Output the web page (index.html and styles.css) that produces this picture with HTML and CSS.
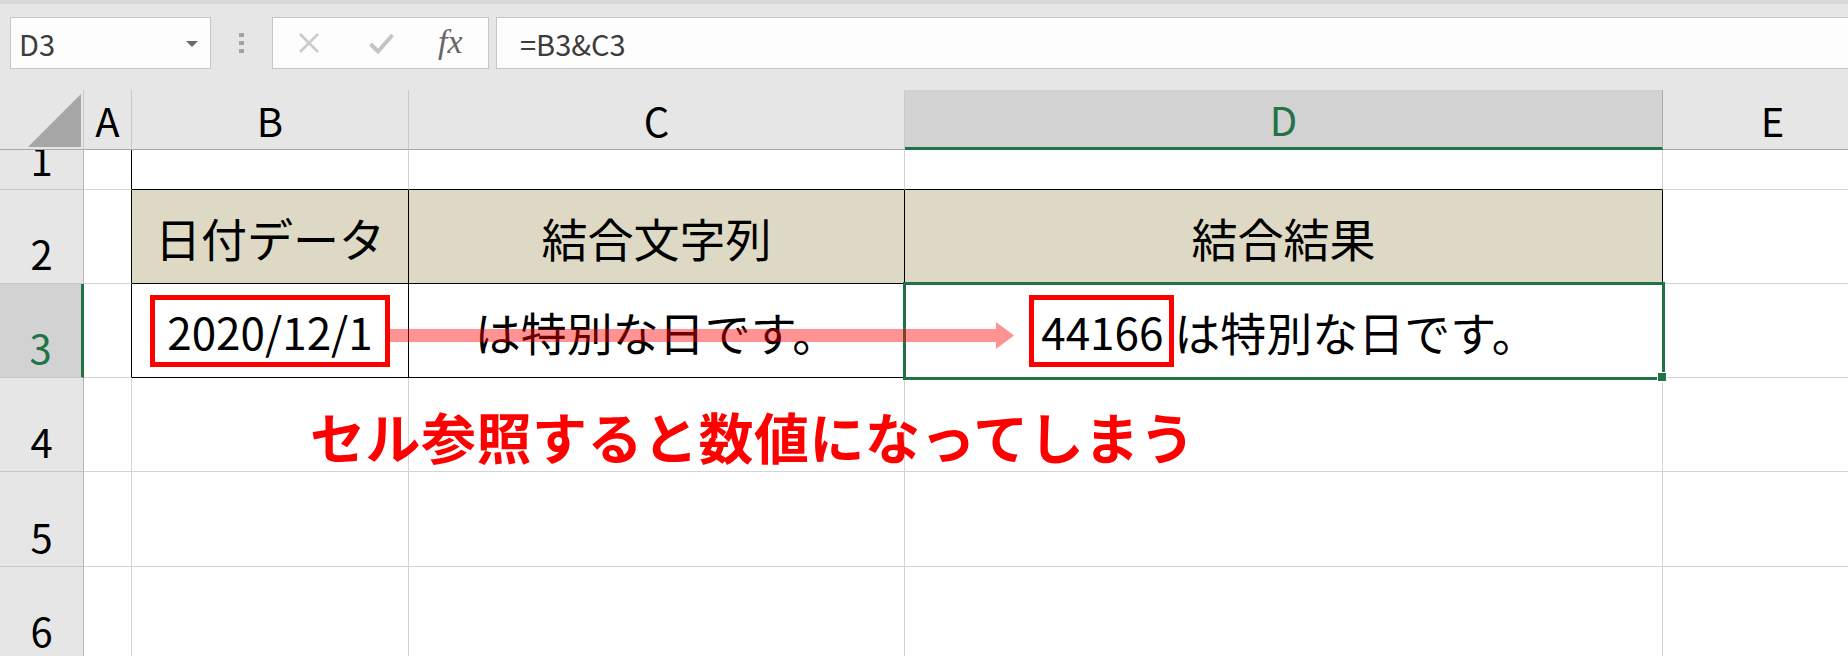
FILE: index.html
```html
<!DOCTYPE html>
<html lang="ja">
<head>
  <meta charset="UTF-8">
  <title>日付データの結合 - Excel</title>
  <link rel="stylesheet" href="styles.css">
</head>
<body>
  <!-- 数式バー -->
  <div class="formula-bar">
    <div class="name-box">
      <span>D3</span>
      <span class="drop"></span>
    </div>
    <div class="grip"><i></i><i></i><i></i></div>
    <div class="fx-box">
      <svg class="icon-cancel" width="22" height="20" viewBox="0 0 22 20">
        <path d="M2 1 L20 19 M20 1 L2 19" stroke="#cbcbcb" stroke-width="2.6" fill="none"/>
      </svg>
      <svg class="icon-enter" width="25" height="21" viewBox="0 0 25 21">
        <path d="M1.5 11 L9 18.5 L23.5 2" stroke="#c4c4c4" stroke-width="4" fill="none"/>
      </svg>
      <span class="fx">fx</span>
    </div>
    <div class="formula">=B3&amp;C3</div>
  </div>

  <!-- シート -->
  <div class="sheet">
    <div class="corner">
      <svg width="83" height="59" viewBox="0 0 83 59"><polygon points="81,4 81,57 28,57" fill="#a6a6a6"/></svg>
    </div>
    <div class="col-head">A</div>
    <div class="col-head">B</div>
    <div class="col-head">C</div>
    <div class="col-head active">D</div>
    <div class="col-head">E</div>

    <div class="row-head">1</div>
    <div class="cell edge-r"></div>
    <div class="cell edge-b"></div>
    <div class="cell edge-b"></div>
    <div class="cell edge-b"></div>
    <div class="cell"></div>

    <div class="row-head">2</div>
    <div class="cell edge-r"></div>
    <div class="cell th">日付データ</div>
    <div class="cell th">結合文字列</div>
    <div class="cell th">結合結果</div>
    <div class="cell"></div>

    <div class="row-head active">3</div>
    <div class="cell edge-r"></div>
    <div class="cell td"><span class="mark">2020/12/1</span></div>
    <div class="cell td">は特別な日です。</div>
    <div class="cell td selected"><span class="mark small">44166</span><span class="rest">は特別な日です。</span></div>
    <div class="cell"></div>

    <div class="row-head">4</div>
    <div class="cell"></div>
    <div class="cell"></div>
    <div class="cell"></div>
    <div class="cell"></div>
    <div class="cell"></div>

    <div class="row-head">5</div>
    <div class="cell"></div>
    <div class="cell"></div>
    <div class="cell"></div>
    <div class="cell"></div>
    <div class="cell"></div>

    <div class="row-head">6</div>
    <div class="cell"></div>
    <div class="cell"></div>
    <div class="cell"></div>
    <div class="cell"></div>
    <div class="cell"></div>

    <!-- 図形：矢印と注釈 -->
    <svg class="arrow" width="626" height="27" viewBox="0 0 626 27">
      <path d="M0 7 H608 V0 L626 13.5 L608 27 V20 H0 Z" fill="#ff0000"/>
    </svg>
    <div class="note">セル参照すると数値になってしまう</div>
  </div>
</body>
</html>
```

FILE: styles.css
```css
html, body {
  margin: 0;
  overflow: hidden;
  background: #ffffff;
}

body {
  width: 1848px;
  height: 656px;
  font-family: "Noto Sans CJK JP", "Noto Sans", sans-serif;
}

/* 数式バー */
.formula-bar {
  height: 90px;
  box-sizing: border-box;
  border-top: 4px solid #d9d9d9;
  background: #e6e6e6;
  display: flex;
  align-items: flex-start;
  padding: 13px 0 0 10px;
}

.name-box {
  width: 201px;
  height: 52px;
  box-sizing: border-box;
  border: 1px solid #c6c6c6;
  background: #fdfdfd;
  display: flex;
  align-items: center;
  justify-content: space-between;
  padding: 0 12px 0 8px;
  font-size: 29px;
  color: #3c3c3c;
}

.drop {
  width: 0;
  height: 0;
  border-left: 6px solid transparent;
  border-right: 6px solid transparent;
  border-top: 6px solid #6b6b6b;
  margin-top: 2px;
}

.grip {
  margin: 16px 0 0 28px;
  width: 5px;
  display: flex;
  flex-direction: column;
  gap: 4px;
}

.grip i {
  display: block;
  width: 5px;
  height: 4px;
  background: #a3a3a3;
}

.fx-box {
  margin-left: 28px;
  width: 217px;
  height: 52px;
  box-sizing: border-box;
  border: 1px solid #c6c6c6;
  background: #fdfdfd;
  display: flex;
  align-items: center;
  padding-left: 25px;
}

.icon-enter {
  margin-left: 49px;
}

.fx {
  margin-left: 44px;
  font-family: "Liberation Serif", serif;
  font-style: italic;
  font-size: 34px;
  color: #6a6464;
  line-height: 1;
  margin-top: -2px;
}

.formula {
  margin-left: 7px;
  flex: 1;
  height: 52px;
  box-sizing: border-box;
  border: 1px solid #c6c6c6;
  border-right: none;
  background: #fdfdfd;
  padding-left: 23px;
  display: flex;
  align-items: center;
  font-size: 29px;
  color: #3c3c3c;
}

/* シート本体 */
.sheet {
  position: relative;
  display: grid;
  grid-template-columns: 84px 48px 277px 496px 758px 220px;
  grid-template-rows: 60px 40px 94px 94px 94px 95px 94px;
  background: #e6e6e6;
}

.corner {
  border-right: 1px solid #c8c8c8;
  border-bottom: 1px solid #a8a8a8;
}

.corner svg {
  display: block;
}

.col-head {
  display: flex;
  align-items: center;
  justify-content: center;
  border-right: 1px solid #c8c8c8;
  border-bottom: 1px solid #a8a8a8;
  font-size: 40px;
  line-height: 1;
  color: #000;
}

.col-head.active {
  background: #d2d2d2;
  color: #217346;
  border-bottom: 3px solid #217346;
  border-right-color: #ababab;
}

.row-head {
  display: flex;
  align-items: flex-end;
  justify-content: center;
  overflow: hidden;
  padding-bottom: 10px;
  border-right: 1px solid #b4b4b4;
  border-bottom: 1px solid #c8c8c8;
  font-size: 40px;
  line-height: 1;
  color: #000;
}

.row-head.active {
  background: #d2d2d2;
  color: #217346;
  border-right: 3px solid #217346;
}

.cell {
  background: #ffffff;
  border-right: 1px solid #d4d4d4;
  border-bottom: 1px solid #d4d4d4;
  display: flex;
  align-items: center;
  justify-content: center;
  font-size: 46px;
  color: #000;
  white-space: nowrap;
}

.cell.edge-r {
  border-right-color: #000;
}

.cell.edge-b {
  border-bottom-color: #000;
}

.cell.th,
.cell.td {
  border-right-color: #000;
  border-bottom-color: #000;
}

.cell.th {
  background: #ddd9c4;
}

/* 赤枠 */
.mark {
  display: inline-block;
  border: 5px solid #ff0000;
  padding: 0 12px;
  font-size: 44px;
  line-height: 62px;
  margin-top: 1px;
}

.mark.small {
  padding: 0 6px 0 7px;
}

.rest {
  margin-left: 0;
}

/* アクティブセル */
.cell.selected {
  position: relative;
}

.cell.selected::after {
  content: "";
  position: absolute;
  left: -2px;
  top: -2px;
  right: -3px;
  bottom: -3px;
  border: 3px solid #217346;
}

.cell.selected::before {
  content: "";
  position: absolute;
  right: -5px;
  bottom: -5px;
  width: 8px;
  height: 8px;
  background: #217346;
  border: 1px solid #ffffff;
  z-index: 1;
}

.arrow {
  position: absolute;
  left: 388px;
  top: 232px;
  opacity: 0.42;
  z-index: 2;
}

.note {
  position: absolute;
  left: 310px;
  top: 318px;
  font-size: 55px;
  font-weight: bold;
  letter-spacing: 0.5px;
  line-height: 1;
  color: #ff0000;
  white-space: nowrap;
}
```
